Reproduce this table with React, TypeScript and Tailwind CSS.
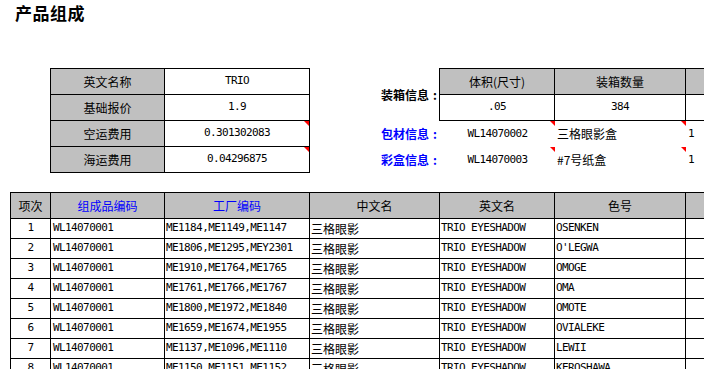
import React from "react";

const MONO = "font-['DejaVu_Sans_Mono','Liberation_Mono',monospace] text-[11px] tracking-[-0.6px]";
const CJK = "font-['Noto_Sans_CJK_SC','Noto_Sans_CJK_JP',sans-serif] text-[12px]";

function Tri() {
  return (
    <span className="absolute right-0 top-0 h-0 w-0 border-t-[5px] border-l-[5px] border-t-[#ff0000] border-l-transparent" />
  );
}

function Cell({
  children,
  className = "",
  tri = false,
}: {
  children?: React.ReactNode;
  className?: string;
  tri?: boolean;
}) {
  return (
    <div
      className={
        "relative flex items-center overflow-hidden whitespace-nowrap border-r border-b border-black text-black " +
        className
      }
    >
      {children}
      {tri && <Tri />}
    </div>
  );
}

const rows = [
  ["1", "WL14070001", "ME1184,ME1149,ME1147", "三格眼影", "TRIO EYESHADOW", "OSENKEN"],
  ["2", "WL14070001", "ME1806,ME1295,MEY2301", "三格眼影", "TRIO EYESHADOW", "O'LEGWA"],
  ["3", "WL14070001", "ME1910,ME1764,ME1765", "三格眼影", "TRIO EYESHADOW", "OMOGE"],
  ["4", "WL14070001", "ME1761,ME1766,ME1767", "三格眼影", "TRIO EYESHADOW", "OMA"],
  ["5", "WL14070001", "ME1800,ME1972,ME1840", "三格眼影", "TRIO EYESHADOW", "OMOTE"],
  ["6", "WL14070001", "ME1659,ME1674,ME1955", "三格眼影", "TRIO EYESHADOW", "OVIALEKE"],
  ["7", "WL14070001", "ME1137,ME1096,ME1110", "三格眼影", "TRIO EYESHADOW", "LEWII"],
  ["8", "WL14070001", "ME1150,ME1151,ME1152", "三格眼影", "TRIO EYESHADOW", "KEROSHAWA"],
  ["9", "WL14070001", "ME1153,ME1154,ME1155", "三格眼影", "TRIO EYESHADOW", "OKOWA"],
];

function Label({ text, color }: { text: string; color: string }) {
  return (
    <span className={color}>
      {text}
      <span className="pl-[4px]">:</span>
    </span>
  );
}

export default function App() {
  return (
    <div className="h-[369px] w-[704px] overflow-hidden bg-white">
      {/* Title */}
      <div className="h-[68px] pl-[15px] pt-[3px]">
        <div className={"font-['Noto_Sans_CJK_SC',sans-serif] text-[17px] font-bold leading-[20px] tracking-[0.5px] text-black"}>
          产品组成
        </div>
      </div>

      {/* Upper section */}
      <div className="flex w-max items-start">
        {/* Left info table */}
        <div className="ml-[50px] grid shrink-0 grid-cols-[114px_145px] border-l border-t border-black">
          {[
            ["英文名称", "TRIO", false],
            ["基础报价", "1.9", false],
            ["空运费用", "0.301302083", true],
            ["海运费用", "0.04296875", true],
          ].map(([k, v, t]) => (
            <React.Fragment key={k as string}>
              <Cell className={"h-[26px] justify-center bg-[#c0c0c0] " + CJK}>{k}</Cell>
              <Cell className={"h-[26px] justify-center " + MONO} tri={t as boolean}>
                {v}
              </Cell>
            </React.Fragment>
          ))}
        </div>

        {/* Labels column */}
        <div className={"flex w-[129px] shrink-0 flex-col items-end whitespace-nowrap pr-[2px] font-bold " + CJK}>
          <div className="flex h-[53px] items-center">
            <Label text="装箱信息" color="text-black" />
          </div>
          <div className="flex h-[26px] items-center">
            <Label text="包材信息" color="text-[#0000ff]" />
          </div>
          <div className="flex h-[26px] items-center">
            <Label text="彩盒信息" color="text-[#0000ff]" />
          </div>
        </div>

        {/* Box info */}
        <div className="flex shrink-0 flex-col">
          <div className="grid w-max grid-cols-[115px_131px_120px] border-l border-t border-black">
            <Cell className={"h-[26px] justify-center bg-[#c0c0c0] " + CJK}>体积(尺寸)</Cell>
            <Cell className={"h-[26px] justify-center bg-[#c0c0c0] " + CJK}>装箱数量</Cell>
            <Cell className={"h-[26px] justify-center bg-[#c0c0c0] " + CJK}></Cell>
            <Cell className={"h-[26px] justify-center " + MONO}>.05</Cell>
            <Cell className={"h-[26px] justify-center " + MONO}>384</Cell>
            <Cell className={"h-[26px] justify-center " + MONO}></Cell>
          </div>
          {[
            ["WL14070002", "三格眼影盒"],
            ["WL14070003", "#7号纸盒"],
          ].map(([code, name]) => (
            <div key={code} className="grid h-[26px] w-max grid-cols-[116px_131px_120px]">
              <div className={"relative flex items-center justify-center pl-[1px] " + MONO}>
                {code}
                <Tri />
              </div>
              <div className={"relative flex items-center pl-[2px] " + CJK}>
                {name}
                <Tri />
              </div>
              <div className={"flex items-center pl-[2px] " + MONO}>1</div>
            </div>
          ))}
        </div>
      </div>

      {/* Main table */}
      <div className="ml-[10px] mt-[19px] grid w-max grid-cols-[40px_114px_145px_130px_115px_131px_120px] border-l border-t border-black">
        <Cell className={"h-[26px] justify-center bg-[#c0c0c0] " + CJK}>项次</Cell>
        <Cell className={"h-[26px] justify-center bg-[#c0c0c0] " + CJK}>
          <span className="text-[#0000ff]">组成品编码</span>
        </Cell>
        <Cell className={"h-[26px] justify-center bg-[#c0c0c0] " + CJK}>
          <span className="text-[#0000ff]">工厂编码</span>
        </Cell>
        <Cell className={"h-[26px] justify-center bg-[#c0c0c0] " + CJK}>中文名</Cell>
        <Cell className={"h-[26px] justify-center bg-[#c0c0c0] " + CJK}>英文名</Cell>
        <Cell className={"h-[26px] justify-center bg-[#c0c0c0] " + CJK}>色号</Cell>
        <Cell className={"h-[26px] justify-center bg-[#c0c0c0] " + CJK}></Cell>
        {rows.map((r) => (
          <React.Fragment key={r[0]}>
            <Cell className={"h-[20px] justify-center " + MONO}>{r[0]}</Cell>
            <Cell className={"h-[20px] pl-[2px] " + MONO}>{r[1]}</Cell>
            <Cell className={"h-[20px] pl-[1px] " + MONO}>{r[2]}</Cell>
            <Cell className={"h-[20px] pl-[1px] " + CJK}>{r[3]}</Cell>
            <Cell className={"h-[20px] pl-[1px] " + MONO}>{r[4]}</Cell>
            <Cell className={"h-[20px] pl-[1px] " + MONO}>{r[5]}</Cell>
            <Cell className={"h-[20px] " + MONO}></Cell>
          </React.Fragment>
        ))}
      </div>
    </div>
  );
}
